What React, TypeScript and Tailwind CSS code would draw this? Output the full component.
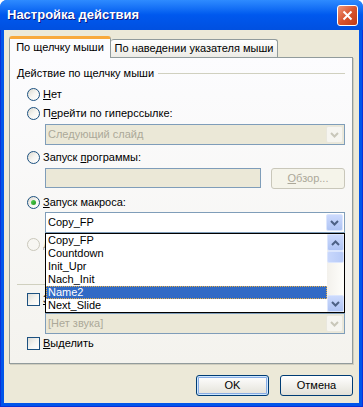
import type { ReactNode } from 'react';

const macros = ['Copy_FP', 'Countdown', 'Init_Upr', 'Nach_Init', 'Name2', 'Next_Slide'];

function Chevron({ up, color }: { up?: boolean; color: string }) {
  return (
    <svg width="9" height="6" viewBox="0 0 9 6" className={up ? 'rotate-180' : ''}>
      <path d="M1 1L4.5 4.5L8 1" fill="none" stroke={color} strokeWidth="2" />
    </svg>
  );
}

function ArrowBtn({ up, disabled, className = '' }: { up?: boolean; disabled?: boolean; className?: string }) {
  return (
    <div
      className={`flex items-center justify-center rounded-[2px] border ${
        disabled
          ? 'border-[#E9E7DD] bg-[#F6F5F0]'
          : 'border-[#DCE6FD] bg-gradient-to-b from-[#CCDAFD] to-[#AFC4F4]'
      } ${className}`}
    >
      <Chevron up={up} color={disabled ? '#C9C7BA' : '#4D6185'} />
    </div>
  );
}

function Radio({ checked, disabled }: { checked?: boolean; disabled?: boolean }) {
  return (
    <div
      className={`flex h-[13px] w-[13px] shrink-0 items-center justify-center rounded-full border ${
        disabled ? 'border-[#CAC8BB] bg-[#F7F6F2]' : 'border-[#1C5180] bg-gradient-to-br from-[#DCD9CF] via-[#F6F5F1] to-white'
      }`}
    >
      {checked && <div className="h-[5px] w-[5px] rounded-full bg-gradient-to-br from-[#55D355] to-[#1E951E]" />}
    </div>
  );
}

function Check() {
  return (
    <div className="h-[13px] w-[13px] shrink-0 border border-[#1C5180] bg-gradient-to-br from-[#DCDCD7] via-[#F4F4F0] to-white" />
  );
}

function Row({ icon, children, grey }: { icon: ReactNode; children: ReactNode; grey?: boolean }) {
  return (
    <div className={`ml-[10px] flex h-[13px] items-center gap-[3px] leading-[13px] ${grey ? 'text-[#ACA899]' : 'text-black'}`}>
      {icon}
      <span>{children}</span>
    </div>
  );
}

// rows covered by the open macro list: only a sliver of the label peeks out
function CoveredRow({ icon, children, grey }: { icon: ReactNode; children: ReactNode; grey?: boolean }) {
  return (
    <div className={`ml-[10px] flex h-[13px] items-center gap-[3px] leading-[13px] ${grey ? 'text-[#ACA899]' : 'text-black'}`}>
      {icon}
      <span className="w-[2px] overflow-hidden whitespace-nowrap">{children}</span>
    </div>
  );
}

function DisabledCombo({ text }: { text: string }) {
  return (
    <div className="ml-[28px] flex h-[21px] w-[300px] items-center border border-[#7F9DB9] bg-[#EBE8D7]">
      <span className="flex-1 pl-[2px] text-[#ACA899]">{text}</span>
      <ArrowBtn disabled className="h-[17px] w-[17px] mr-px" />
    </div>
  );
}

export default function App() {
  return (
    <div className="flex h-[407px] w-[363px] flex-col overflow-hidden rounded-t-[7px] bg-[#0055EA] font-['Tahoma','Liberation_Sans',Arial,sans-serif] text-[11px] text-black">
      {/* title bar */}
      <div className="flex h-[30px] shrink-0 items-center justify-between bg-gradient-to-b from-[#2E8BFF] via-[#0058EE] to-[#0050E0] pl-[7px] pr-[5px]">
        <span className="font-['Liberation_Sans',Arial,sans-serif] text-[13px] font-bold text-white [text-shadow:1px_1px_0_#0A1883]">
          Настройка действия
        </span>
        <div className="flex h-[21px] w-[21px] items-center justify-center rounded-[3px] border border-white bg-gradient-to-br from-[#EE9577] via-[#D8542E] to-[#C13A14]">
          <svg width="11" height="11" viewBox="0 0 11 11">
            <path d="M1.5 1.5L9.5 9.5M9.5 1.5L1.5 9.5" stroke="white" strokeWidth="2" />
          </svg>
        </div>
      </div>

      <div className="flex flex-1 flex-col px-[4px] pb-[4px] shadow-[inset_1px_0_0_#0831D9,inset_-1px_0_0_#0831D9,inset_0_-1px_0_#0831D9]">
        <div className="flex flex-1 flex-col bg-[#ECE9D8] pt-[6px]">
          {/* tabs */}
          <div className="ml-[5px] flex h-[21px] items-end">
            <div className="relative z-10 mb-[-1px] flex h-[22px] w-[102px] items-center justify-center rounded-t-[3px] border-x border-t-[3px] border-x-[#919B9C] border-t-[#F8A93C] bg-[#FCFCFE] pb-[2px]">
              По щелчку мыши
            </div>
            <div className="flex h-[18px] w-[167px] items-center justify-center rounded-t-[3px] border-r border-t border-[#919B9C] bg-gradient-to-b from-white to-[#ECEBE6]">
              По наведении указателя мыши
            </div>
          </div>

          {/* panel */}
          <div className="ml-[5px] flex h-[307px] w-[344px] flex-col border border-[#919B9C] bg-gradient-to-b from-[#FCFCFE] to-[#F4F3EE] px-[7px] shadow-[1px_1px_0_#D0CEBF]">
            <div className="mt-[7px] flex h-[16px] items-center">
              <span>Действие по щелчку мыши</span>
              <div className="ml-[4px] h-px flex-1 bg-[#D0D0BF]" />
            </div>

            <div className="mt-[7px]">
              <Row icon={<Radio />}>
                <u>Н</u>ет
              </Row>
            </div>
            <div className="mt-[6px]">
              <Row icon={<Radio />}>
                П<u>е</u>рейти по гиперссылке:
              </Row>
            </div>
            <div className="mt-[4px]">
              <DisabledCombo text="Следующий слайд" />
            </div>
            <div className="mt-[6px]">
              <Row icon={<Radio />}>
                Запуск <u>п</u>рограммы:
              </Row>
            </div>
            <div className="ml-[28px] mt-[4px] flex h-[21px] w-[300px] items-start gap-[10px]">
              <div className="h-[20px] w-[216px] border border-[#7F9DB9] bg-[#EBE8D7]" />
              <div className="flex h-[21px] w-[74px] items-center justify-center rounded-[3px] border border-[#C9C7BA] bg-[#F5F4EA] text-[#ACA899]">
                <span>
                  <u>О</u>бзор...
                </span>
              </div>
            </div>
            <div className="mt-[7px]">
              <Row icon={<Radio checked />}>
                <u>З</u>апуск макроса:
              </Row>
            </div>

            {/* macro combo with open list */}
            <div className="relative z-20 ml-[28px] mt-[3px] w-[300px]">
              <div className="flex h-[21px] items-center border border-[#7F9DB9] bg-white">
                <span className="flex-1 pl-[2px]">Copy_FP</span>
                <ArrowBtn className="mr-px h-[17px] w-[17px]" />
              </div>
              <div className="absolute left-0 top-full flex h-[80px] w-[300px] border border-black bg-white">
                <div className="flex flex-1 flex-col">
                  {macros.map((m) => (
                    <div
                      key={m}
                      className={`h-[13px] pl-[1px] leading-[11px] ${
                        m === 'Name2' ? 'border border-dotted border-[#E8B048] bg-[#316AC5] text-white' : 'border border-transparent'
                      }`}
                    >
                      {m}
                    </div>
                  ))}
                </div>
                <div className="flex w-[17px] flex-col bg-gradient-to-r from-[#F3F1EC] to-[#FEFEFB]">
                  <ArrowBtn up className="h-[17px] w-[17px]" />
                  <div className="h-[12px] rounded-[2px] border border-[#DCE6FD] bg-gradient-to-r from-[#C8D7FC] to-[#B7CAF7]" />
                  <div className="flex-1" />
                  <ArrowBtn className="h-[17px] w-[17px]" />
                </div>
              </div>
            </div>

            <div className="mt-[5px]">
              <CoveredRow icon={<Radio disabled />} grey>
                Действие объекта:
              </CoveredRow>
            </div>
            <div className="mt-[33px] h-px bg-[#D0D0BF]" />
            <div className="mt-[8px]">
              <CoveredRow icon={<Check />}>
                <u>З</u>вук:
              </CoveredRow>
            </div>
            <div className="mt-[7px]">
              <DisabledCombo text="[Нет звука]" />
            </div>
            <div className="mt-[3px]">
              <Row icon={<Check />}>
                <u>В</u>ыделить
              </Row>
            </div>
          </div>

          {/* buttons */}
          <div className="mr-[6px] mt-[11px] flex h-[21px] justify-end gap-[11px]">
            <button className="h-[21px] w-[73px] rounded-[3px] border border-[#003C74] bg-gradient-to-b from-white to-[#E3E1D8] shadow-[inset_0_0_0_1px_#CEE7FF,inset_0_0_0_2px_#89ADE4]">
              OK
            </button>
            <button className="h-[21px] w-[73px] rounded-[3px] border border-[#003C74] bg-gradient-to-b from-white to-[#E3E1D8]">
              Отмена
            </button>
          </div>
        </div>
      </div>
    </div>
  );
}
